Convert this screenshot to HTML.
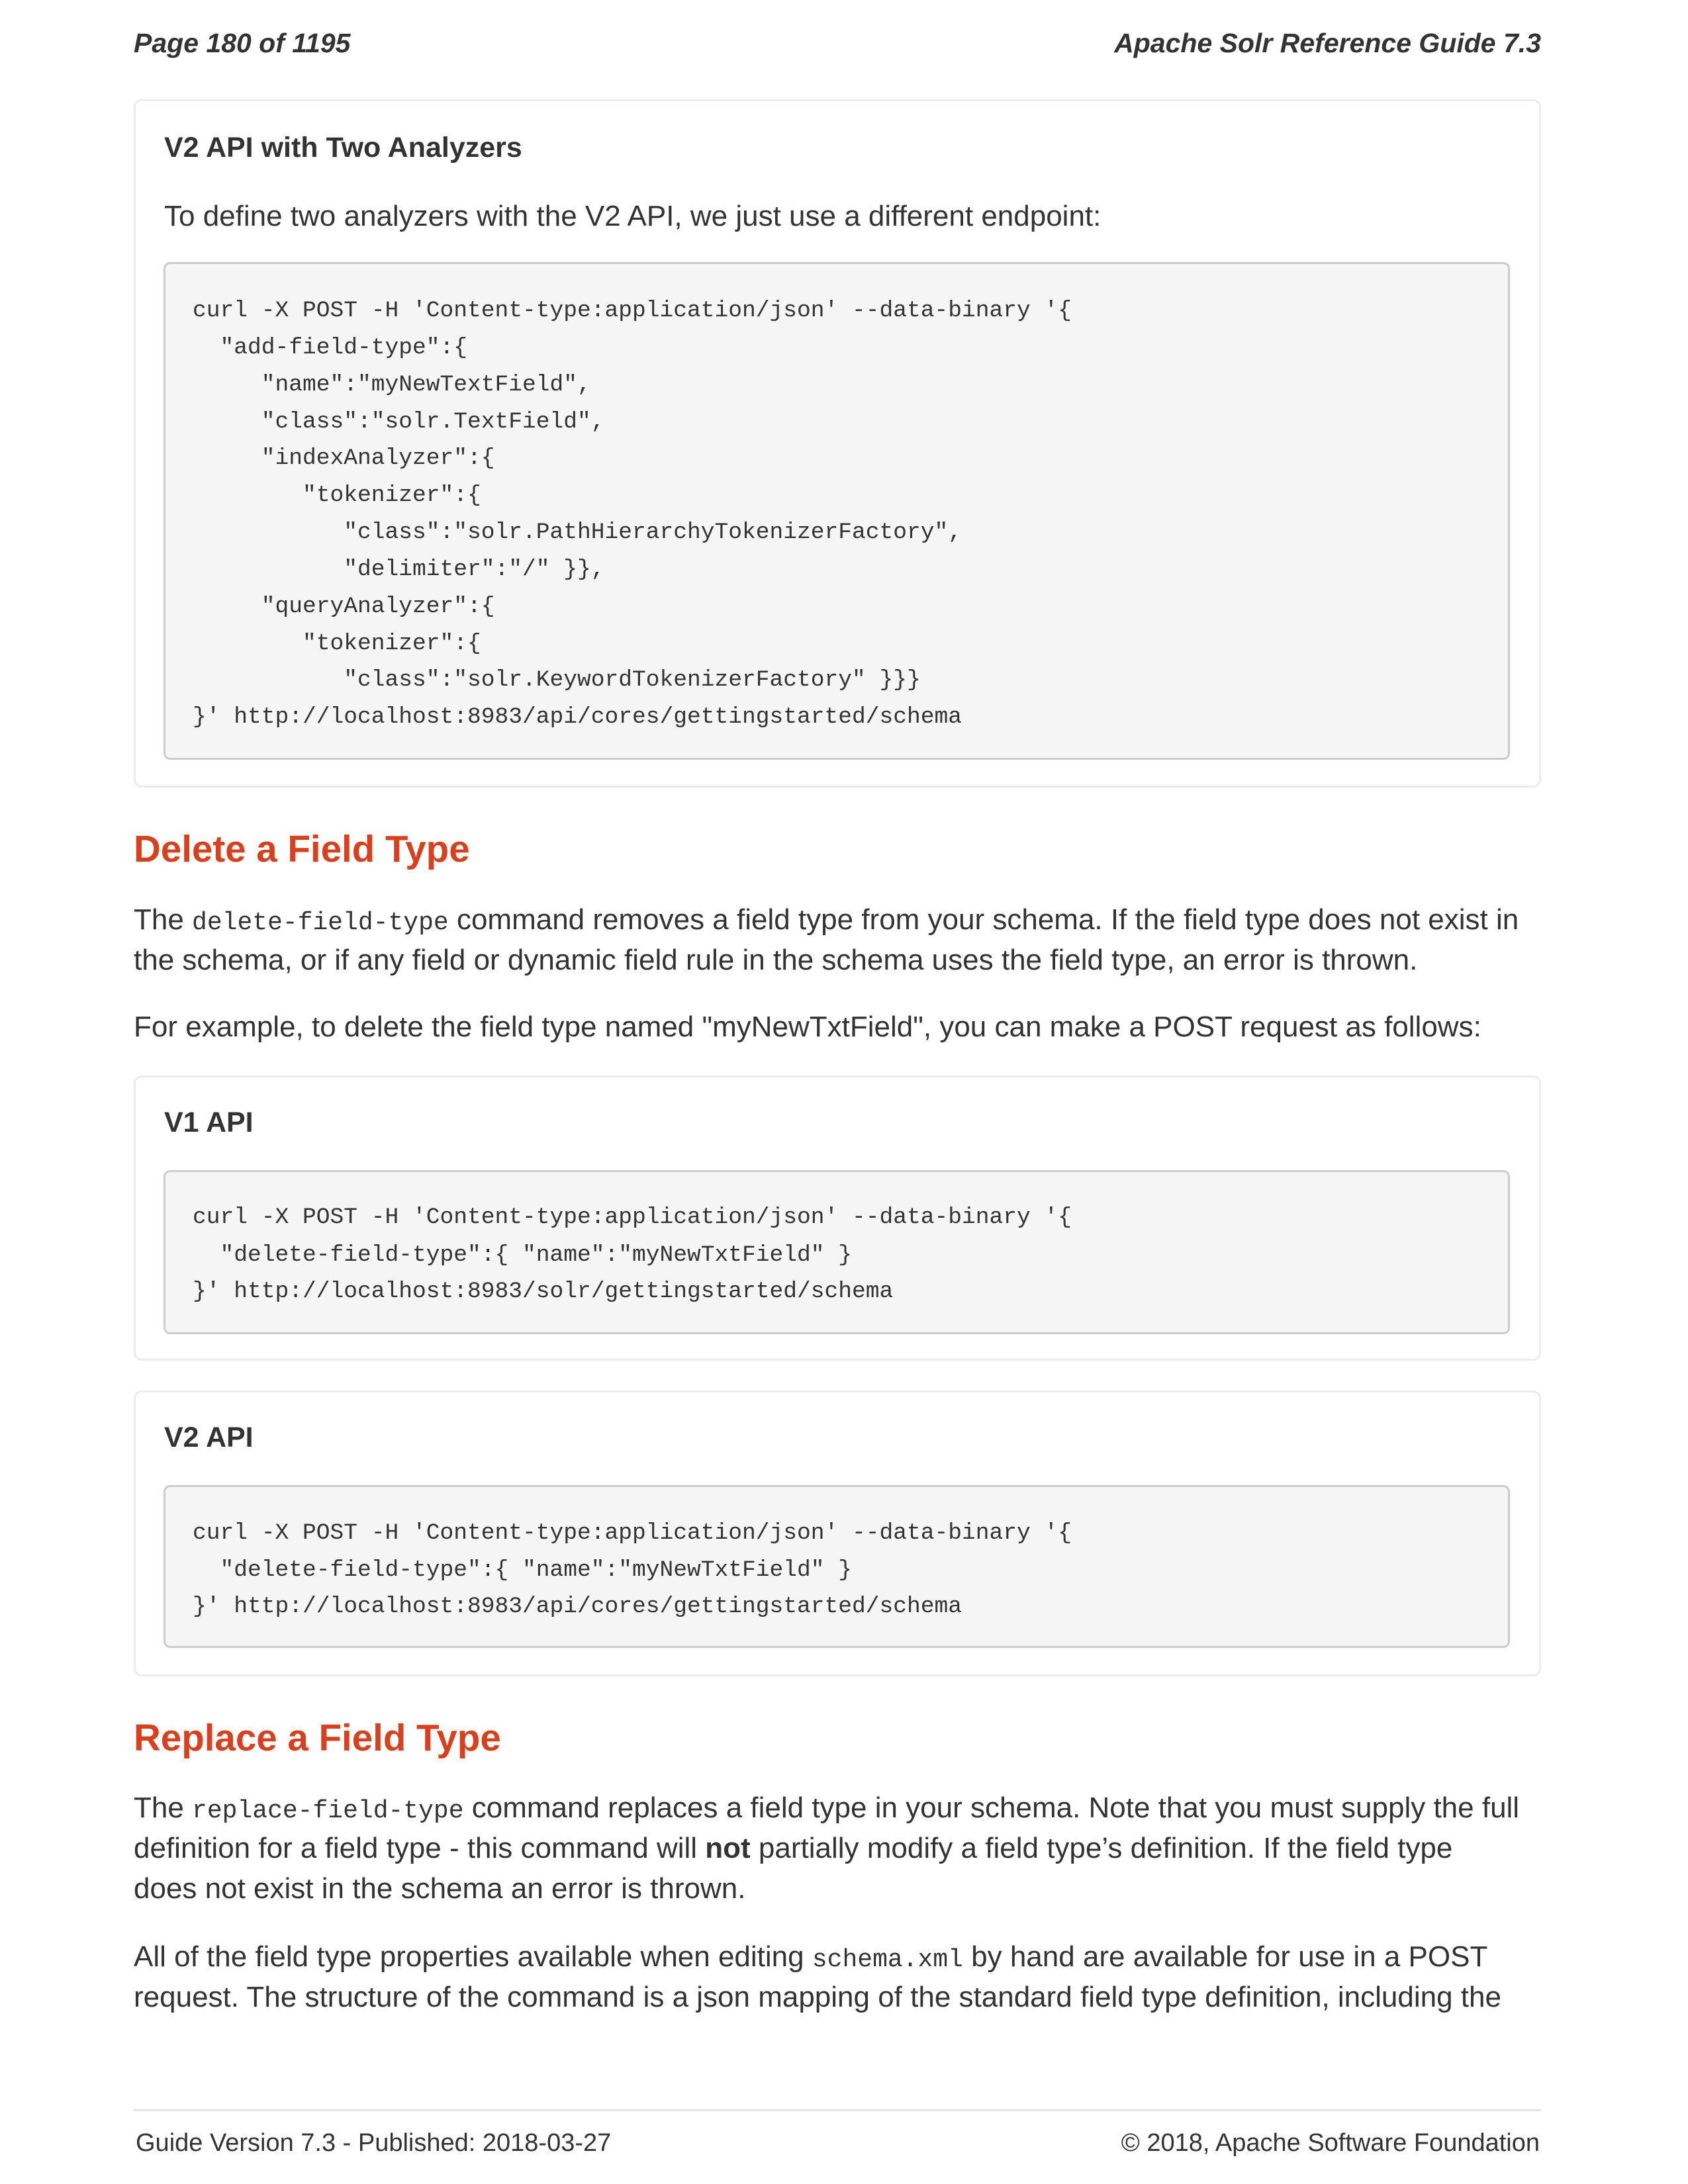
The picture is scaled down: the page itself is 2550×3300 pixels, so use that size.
<!DOCTYPE html>
<html><head><meta charset="utf-8"><style>
*{margin:0;padding:0;box-sizing:border-box}
body{width:2550px;height:3300px;background:#fff;position:relative;font-family:"Liberation Sans",sans-serif;color:#333;overflow:hidden}
.t{position:absolute;left:202px;white-space:nowrap;height:60px;line-height:60px;font-size:44px}
.hd{font-weight:bold;font-style:italic;font-size:41px}
.box{position:absolute;left:202px;width:2126px;border:3px solid #ececec;border-radius:12px}
.code{position:absolute;left:247px;width:2034px;background:#f5f5f5;border:3px solid #ccc;border-radius:10px}
.c{position:absolute;left:291px;white-space:pre;font-family:"Liberation Mono",monospace;font-size:34.6px;height:56px;line-height:56px;color:#333}
.h2{color:#d9411e;font-weight:bold;font-size:56.5px;height:80px;line-height:80px}
.h3{font-weight:bold;font-size:43px;left:248px}
code{font-family:"Liberation Mono",monospace;font-size:38px}
</style></head><body>
<div class="t hd" style="top:35px">Page 180 of 1195</div>
<div class="t hd" style="top:35px;left:auto;right:222px">Apache Solr Reference Guide 7.3</div>

<div class="box" style="top:150px;height:1040px"></div>
<div class="t h3" style="top:193px">V2 API with Two Analyzers</div>
<div class="t" style="top:297px;left:248px">To define two analyzers with the V2 API, we just use a different endpoint:</div>
<div class="code" style="top:396px;height:752px"></div>
<div class="c" style="top:442px">curl -X POST -H 'Content-type:application/json' --data-binary '{</div>
<div class="c" style="top:498px">  "add-field-type":{</div>
<div class="c" style="top:554px">     "name":"myNewTextField",</div>
<div class="c" style="top:610px">     "class":"solr.TextField",</div>
<div class="c" style="top:665px">     "indexAnalyzer":{</div>
<div class="c" style="top:721px">        "tokenizer":{</div>
<div class="c" style="top:777px">           "class":"solr.PathHierarchyTokenizerFactory",</div>
<div class="c" style="top:833px">           "delimiter":"/" }},</div>
<div class="c" style="top:889px">     "queryAnalyzer":{</div>
<div class="c" style="top:945px">        "tokenizer":{</div>
<div class="c" style="top:1000px">           "class":"solr.KeywordTokenizerFactory" }}}</div>
<div class="c" style="top:1056px">}' http://localhost:8983/api/cores/gettingstarted/schema</div>

<div class="t h2" style="top:1243px">Delete a Field Type</div>
<div class="t" style="top:1360px">The <code>delete-field-type</code> command removes a field type from your schema. If the field type does not exist in</div>
<div class="t" style="top:1421px">the schema, or if any field or dynamic field rule in the schema uses the field type, an error is thrown.</div>
<div class="t" style="top:1522px">For example, to delete the field type named "myNewTxtField", you can make a POST request as follows:</div>

<div class="box" style="top:1625px;height:431px"></div>
<div class="t h3" style="top:1666px">V1 API</div>
<div class="code" style="top:1768px;height:248px"></div>
<div class="c" style="top:1812px">curl -X POST -H 'Content-type:application/json' --data-binary '{</div>
<div class="c" style="top:1869px">  "delete-field-type":{ "name":"myNewTxtField" }</div>
<div class="c" style="top:1924px">}' http://localhost:8983/solr/gettingstarted/schema</div>

<div class="box" style="top:2101px;height:432px"></div>
<div class="t h3" style="top:2142px">V2 API</div>
<div class="code" style="top:2244px;height:246px"></div>
<div class="c" style="top:2289px">curl -X POST -H 'Content-type:application/json' --data-binary '{</div>
<div class="c" style="top:2345px">  "delete-field-type":{ "name":"myNewTxtField" }</div>
<div class="c" style="top:2400px">}' http://localhost:8983/api/cores/gettingstarted/schema</div>

<div class="t h2" style="top:2586px">Replace a Field Type</div>
<div class="t" style="top:2702px">The <code>replace-field-type</code> command replaces a field type in your schema. Note that you must supply the full</div>
<div class="t" style="top:2763px">definition for a field type - this command will <b>not</b> partially modify a field type’s definition. If the field type</div>
<div class="t" style="top:2824px">does not exist in the schema an error is thrown.</div>
<div class="t" style="top:2927px">All of the field type properties available when editing <code>schema.xml</code> by hand are available for use in a POST</div>
<div class="t" style="top:2988px">request. The structure of the command is a json mapping of the standard field type definition, including the</div>

<div style="position:absolute;left:202px;width:2126px;top:3187px;height:3px;background:#e4e4e4"></div>
<div class="t" style="top:3208px;font-size:38px;left:205px">Guide Version 7.3 - Published: 2018-03-27</div>
<div class="t" style="top:3208px;font-size:38px;left:auto;right:224px">© 2018, Apache Software Foundation</div>
</body></html>
